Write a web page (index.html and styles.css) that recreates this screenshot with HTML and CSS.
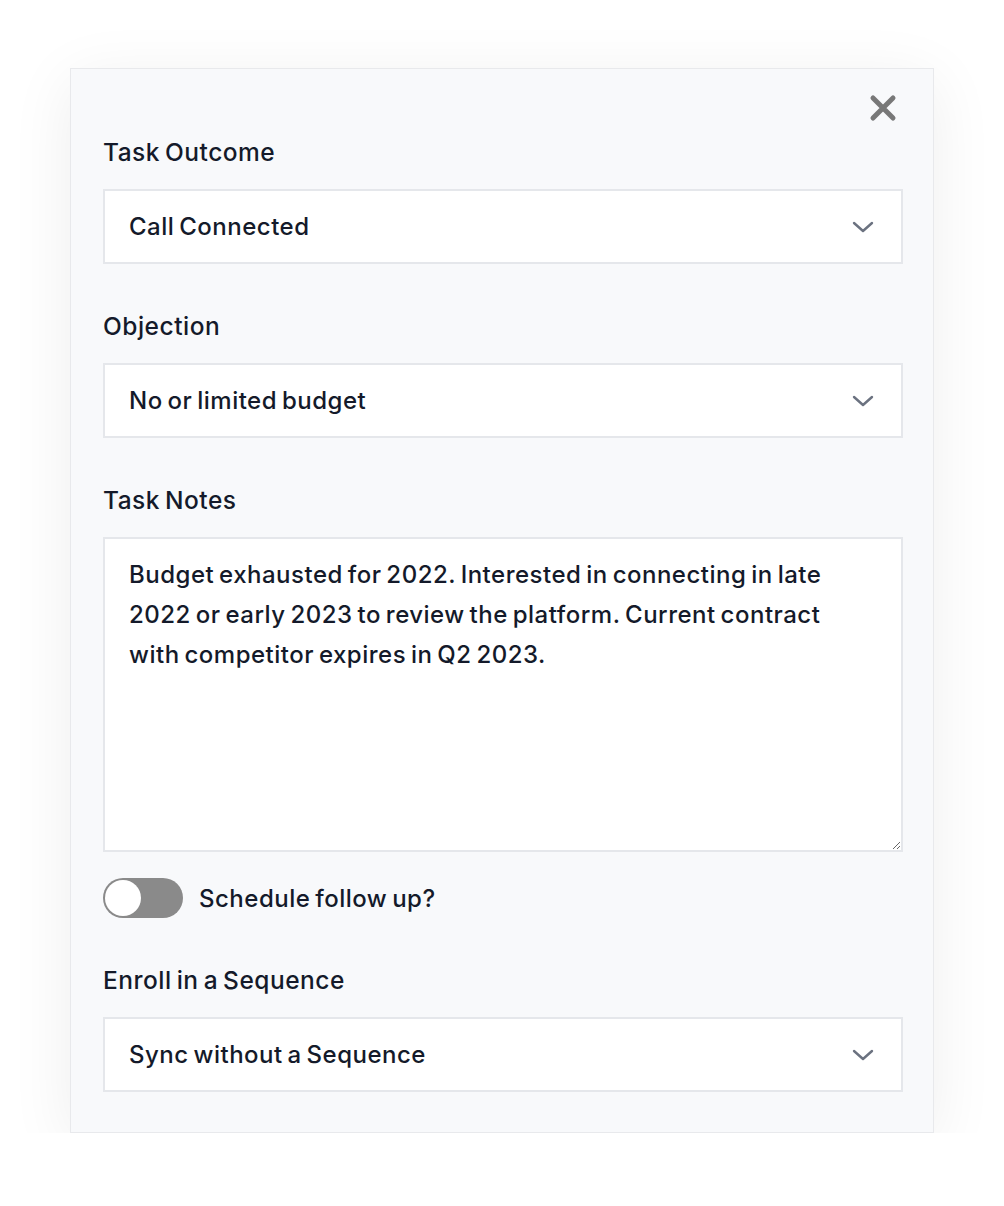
FILE: index.html
```html
<!DOCTYPE html>
<html>
<head>
<meta charset="utf-8">
<link rel="stylesheet" href="styles.css">
</head>
<body>
<div class="card">
  <div class="head">
    <button class="close" aria-label="Close">
      <svg width="28" height="28" viewBox="0 0 28 28"><path d="M4 4 L24 24 M24 4 L4 24" stroke="#787878" stroke-width="5" stroke-linecap="round"/></svg>
    </button>
  </div>
  <label class="label">Task Outcome</label>
  <div class="select"><span>Call Connected</span><svg class="chev" width="22" height="12" viewBox="0 0 22 12"><path d="M2 2 L11 10 L20 2" fill="none" stroke="#6b7280" stroke-width="2.4" stroke-linecap="round" stroke-linejoin="round"/></svg></div>
  <label class="label gap">Objection</label>
  <div class="select"><span>No or limited budget</span><svg class="chev" width="22" height="12" viewBox="0 0 22 12"><path d="M2 2 L11 10 L20 2" fill="none" stroke="#6b7280" stroke-width="2.4" stroke-linecap="round" stroke-linejoin="round"/></svg></div>
  <label class="label gap">Task Notes</label>
  <textarea class="notes">Budget exhausted for 2022. Interested in connecting in late 2022 or early 2023 to review the platform. Current contract with competitor expires in Q2 2023.</textarea>
  <div class="toggle-row">
    <span class="toggle"><span class="knob"></span></span>
    <span class="toggle-label">Schedule follow up?</span>
  </div>
  <label class="label gap">Enroll in a Sequence</label>
  <div class="select"><span>Sync without a Sequence</span><svg class="chev" width="22" height="12" viewBox="0 0 22 12"><path d="M2 2 L11 10 L20 2" fill="none" stroke="#6b7280" stroke-width="2.4" stroke-linecap="round" stroke-linejoin="round"/></svg></div>
</div>
</body>
</html>
```
FILE: styles.css
```css
* { box-sizing: border-box; }
html, body { margin: 0; background: #ffffff; }
body {
  padding: 68px 0 0 70px;
  font-family: Inter, "Noto Sans", sans-serif;
  color: #141a2a;
}
.card {
  width: 864px;
  background: #f8f9fb;
  border: 1px solid #e8e9ec;
  box-shadow: 0 12px 60px rgba(0, 0, 0, 0.07);
  padding: 25px 30px 40px 32px;
  display: flex;
  flex-direction: column;
}
.head {
  display: flex;
  justify-content: flex-end;
  height: 28px;
  margin-bottom: 14px;
  padding-right: 6px;
}
.close {
  border: 0;
  background: none;
  padding: 0;
  width: 28px;
  height: 28px;
  cursor: pointer;
}
.close svg { display: block; }
.label {
  display: block;
  font-size: 24.5px;
  line-height: 32px;
  height: 32px;
  margin-bottom: 21px;
  font-weight: 500;
  letter-spacing: 0.5px;
  word-spacing: -2px;
}
.label.gap { margin-top: 46px; }
.select {
  height: 75px;
  background: #ffffff;
  border: 2px solid #e5e7eb;
  padding: 0 24px 0 24px;
  display: flex;
  align-items: center;
  justify-content: space-between;
  font-size: 24px;
  font-weight: 500;
  letter-spacing: 0.5px;
  word-spacing: -2px;
}
.chev { display: block; margin-right: 3px; }
.notes {
  display: block;
  width: 100%;
  height: 315px;
  background: #ffffff;
  border: 2px solid #e5e7eb;
  padding: 16px 40px 16px 24px;
  font-family: inherit;
  font-size: 24px;
  line-height: 40px;
  font-weight: 500;
  letter-spacing: 0.5px;
  word-spacing: -2px;
  color: #141a2a;
  resize: vertical;
  outline: none;
}
.toggle-row {
  display: flex;
  align-items: center;
  margin-top: 26px;
  height: 40px;
}
.toggle {
  width: 80px;
  height: 40px;
  border-radius: 20px;
  background: #8a8a8a;
  position: relative;
  display: block;
  flex: none;
}
.knob {
  position: absolute;
  left: 2px;
  top: 2px;
  width: 36px;
  height: 36px;
  border-radius: 50%;
  background: #ffffff;
}
.toggle-label {
  margin-left: 16px;
  font-size: 24px;
  font-weight: 500;
  letter-spacing: 0.5px;
  word-spacing: -2px;
}
```
